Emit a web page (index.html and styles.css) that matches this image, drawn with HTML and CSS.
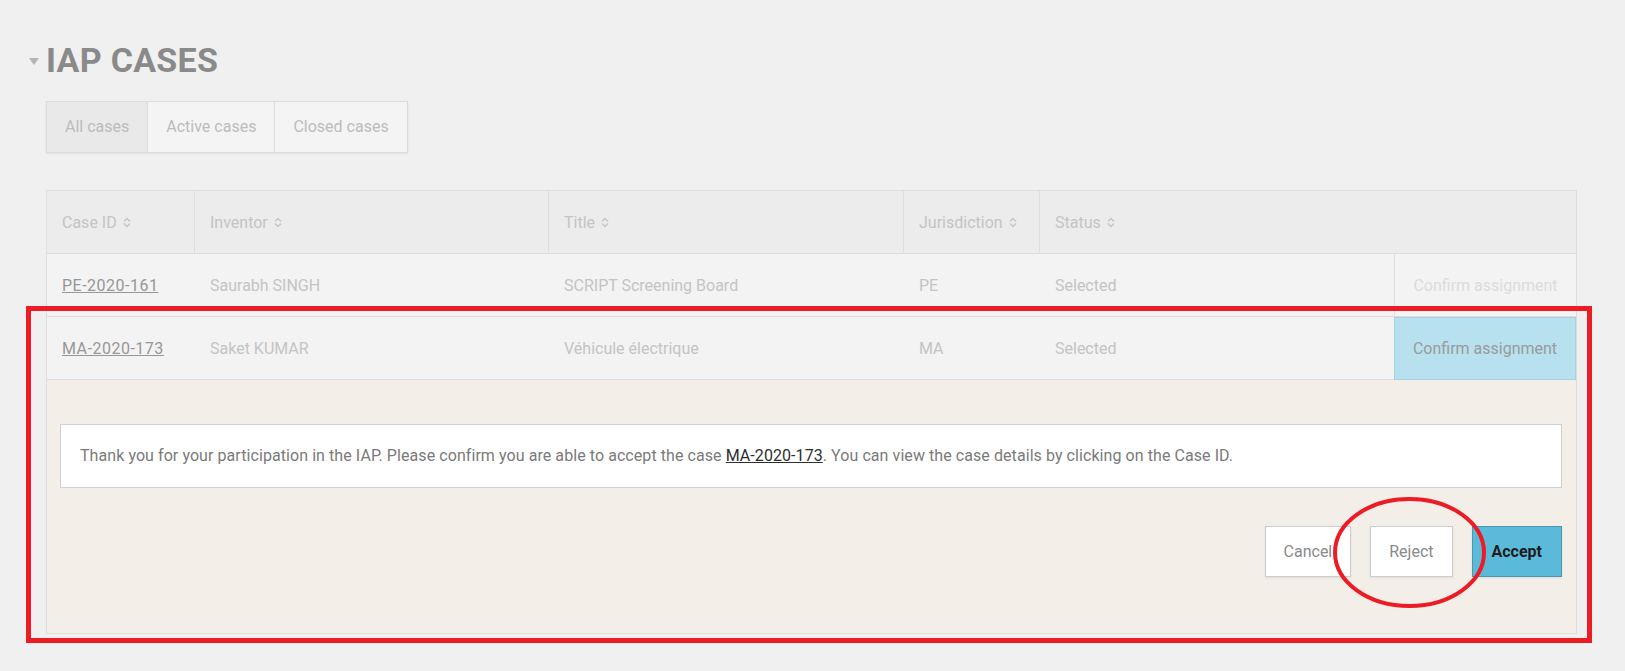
FILE: index.html
```html
<!DOCTYPE html>
<html lang="en">
<head>
<meta charset="utf-8">
<title>IAP Cases</title>
<link rel="stylesheet" href="styles.css">
</head>
<body>
<div class="page">
  <div class="heading">
    <span class="caret"></span>
    <h1 class="title">IAP CASES</h1>
  </div>

  <div class="tabs">
    <div class="tab tab-active">All cases</div>
    <div class="tab">Active cases</div>
    <div class="tab">Closed cases</div>
  </div>

  <div class="cases">
    <div class="row row-head">
      <div class="cell hcell">Case ID <svg class="sort" viewBox="0 0 8 11"><polyline points="1,4.5 4,1.5 7,4.5"/><polyline points="1,6.5 4,9.5 7,6.5"/></svg></div>
      <div class="cell hcell">Inventor <svg class="sort" viewBox="0 0 8 11"><polyline points="1,4.5 4,1.5 7,4.5"/><polyline points="1,6.5 4,9.5 7,6.5"/></svg></div>
      <div class="cell hcell">Title <svg class="sort" viewBox="0 0 8 11"><polyline points="1,4.5 4,1.5 7,4.5"/><polyline points="1,6.5 4,9.5 7,6.5"/></svg></div>
      <div class="cell hcell">Jurisdiction <svg class="sort" viewBox="0 0 8 11"><polyline points="1,4.5 4,1.5 7,4.5"/><polyline points="1,6.5 4,9.5 7,6.5"/></svg></div>
      <div class="cell">Status <svg class="sort" viewBox="0 0 8 11"><polyline points="1,4.5 4,1.5 7,4.5"/><polyline points="1,6.5 4,9.5 7,6.5"/></svg></div>
      <div class="cell"></div>
    </div>

    <div class="row">
      <div class="cell"><a class="case-link" href="#">PE-2020-161</a></div>
      <div class="cell">Saurabh SINGH</div>
      <div class="cell">SCRIPT Screening Board</div>
      <div class="cell">PE</div>
      <div class="cell">Selected</div>
      <div class="cell action action-muted">Confirm assignment</div>
    </div>

    <div class="row">
      <div class="cell"><a class="case-link" href="#">MA-2020-173</a></div>
      <div class="cell">Saket KUMAR</div>
      <div class="cell">Véhicule électrique</div>
      <div class="cell">MA</div>
      <div class="cell">Selected</div>
      <div class="cell action action-on">Confirm assignment</div>
    </div>

    <div class="panel">
      <div class="message">Thank you for your participation in the IAP. Please confirm you are able to accept the case <a class="msg-link" href="#">MA-2020-173</a>. You can view the case details by clicking on the Case ID.</div>
      <div class="buttons">
        <button class="btn">Cancel</button>
        <button class="btn">Reject</button>
        <button class="btn btn-accept">Accept</button>
      </div>
    </div>
  </div>
</div>

<div class="mark-box"></div>
<svg class="mark-ring" viewBox="0 0 153 111"><ellipse cx="76.5" cy="55.5" rx="74.5" ry="53.5"/></svg>
</body>
</html>
```

FILE: styles.css
```css
html, body {
  margin: 0;
  padding: 0;
}
body {
  position: relative;
  background: #f0f0f0;
  font-family: Roboto, "Liberation Sans", Arial, sans-serif;
  font-size: 16px;
  color: #c2c2c2;
  min-height: 671px;
}
.page {
  padding: 40px 48px 0 46px;
}
.heading {
  display: flex;
  align-items: center;
  margin-left: -17px;
  height: 40px;
}
.caret {
  width: 0;
  height: 0;
  border-left: 5px solid transparent;
  border-right: 5px solid transparent;
  border-top: 7px solid #b4b4b4;
  margin: 3px 7px 0 0;
}
.title {
  margin: 0;
  font-size: 34px;
  line-height: 40px;
  font-weight: 700;
  color: #8a8a8a;
  letter-spacing: 0.3px;
}
.tabs {
  display: inline-flex;
  margin-top: 21px;
  box-shadow: 0 1px 2px rgba(0,0,0,0.07);
}
.tab {
  height: 50px;
  line-height: 50px;
  padding: 0 18px;
  border: 1px solid #dcdcdc;
  background: #f4f4f4;
  color: #bcbcbc;
}
.tab + .tab {
  border-left: none;
}
.tab-active {
  background: #e9e9e9;
}
.cases {
  margin-top: 37px;
  border: 1px solid #dedede;
}
.row {
  display: grid;
  grid-template-columns: 148px 354px 355px 136px 354px 1fr;
  height: 62px;
  border-bottom: 1px solid #dcdcdc;
  background: #f3f3f3;
}
.row-head {
  background: #ececec;
}
.cell {
  display: flex;
  align-items: center;
  padding: 0 15px;
  white-space: nowrap;
  color: #c4c4c4;
}
.hcell {
  border-right: 1px solid #dedede;
}
.sort {
  width: 8px;
  height: 11px;
  margin-left: 6px;
  fill: none;
  stroke: #c6c6c6;
  stroke-width: 1.5;
}
.case-link {
  color: #979797;
  text-decoration: underline;
  letter-spacing: 0.5px;
}
.action {
  justify-content: center;
  padding: 0;
}
.action-muted {
  border-left: 1px solid #e0e0e0;
  color: #dcdcdc;
}
.action-on {
  background: #b7e1ee;
  border: 1px solid #a6d3e0;
  color: #9a9a9a;
  margin-bottom: -1px;
}
.panel {
  background: #f3efe8;
  padding: 44px 14px 56px 13px;
}
.message {
  background: #fff;
  border: 1px solid #d0d0d0;
  height: 62px;
  line-height: 62px;
  padding: 0 19px;
  color: #7a7a7a;
  white-space: nowrap;
  letter-spacing: 0.07px;
}
.msg-link {
  color: #2e2e2e;
  text-decoration: underline;
}
.buttons {
  display: flex;
  justify-content: flex-end;
  gap: 19px;
  margin-top: 38px;
}
.btn {
  height: 51px;
  padding: 0 18px;
  background: #fff;
  border: 1px solid #cdcdcd;
  box-shadow: 0 1px 2px rgba(0,0,0,0.08);
  font-family: Roboto, "Liberation Sans", Arial, sans-serif;
  font-size: 16px;
  color: #8a8a8a;
}
.btn-accept {
  background: #5bbad9;
  border-color: #4a98b4;
  color: #1c1c1c;
  font-weight: 700;
  padding: 0 19px;
}
.mark-box {
  position: absolute;
  left: 26px;
  top: 306px;
  width: 1566px;
  height: 337px;
  box-sizing: border-box;
  border: 5px solid #ed1c24;
}
.mark-ring {
  position: absolute;
  left: 1333px;
  top: 497px;
  width: 153px;
  height: 111px;
  fill: none;
  stroke: #ed1c24;
  stroke-width: 4;
}
```
